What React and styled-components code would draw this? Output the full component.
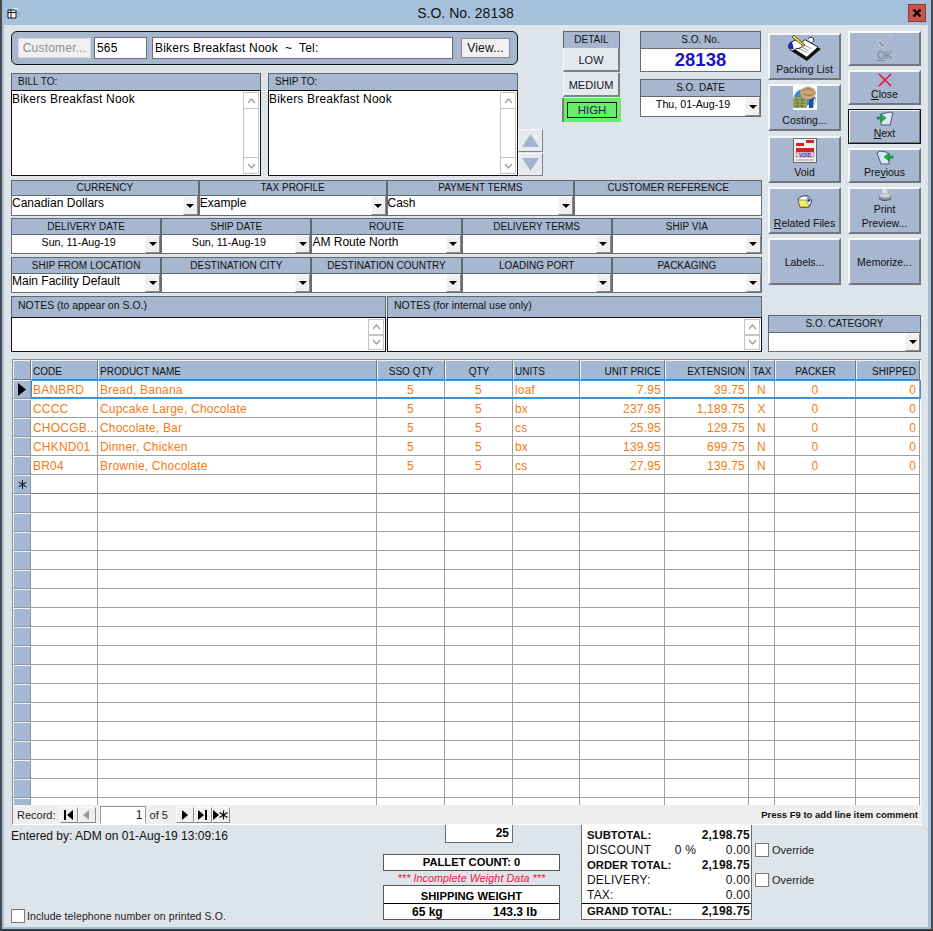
import React from "react";
import styled, { createGlobalStyle } from "styled-components";

const GlobalStyle = createGlobalStyle`
  html, body { margin: 0; padding: 0; background: #fff; }
  * { box-sizing: border-box; }
  body { font-family: "Liberation Sans", Arial, sans-serif; font-size: 12px; color: #000; }
`;

const columns = "18px 67px 279px 68px 68px 67px 85px 84px 26px 81px 64px";

const headers = [
  { label: "", align: "left" },
  { label: "CODE", align: "left" },
  { label: "PRODUCT NAME", align: "left" },
  { label: "SSO QTY", align: "center" },
  { label: "QTY", align: "center" },
  { label: "UNITS", align: "left" },
  { label: "UNIT PRICE", align: "right" },
  { label: "EXTENSION", align: "right" },
  { label: "TAX", align: "center" },
  { label: "PACKER", align: "center" },
  { label: "SHIPPED", align: "right" },
];

const lines = [
  ["BANBRD", "Bread, Banana", "5", "5", "loaf", "7.95", "39.75", "N", "0", "0"],
  ["CCCC", "Cupcake Large, Chocolate", "5", "5", "bx", "237.95", "1,189.75", "X", "0", "0"],
  ["CHOCGB...", "Chocolate, Bar", "5", "5", "cs", "25.95", "129.75", "N", "0", "0"],
  ["CHKND01", "Dinner, Chicken", "5", "5", "bx", "139.95", "699.75", "N", "0", "0"],
  ["BR04", "Brownie, Chocolate", "5", "5", "cs", "27.95", "139.75", "N", "0", "0"],
];

const cellAlign = ["left", "left", "center", "center", "left", "right", "right", "center", "center", "right"];

const Window = styled.div`
  width: 933px;
  height: 931px;
  overflow: hidden;
  background: #a6c0dc;
  border-left: 2px solid #4a4a4a;
  border-right: 2px solid #4a4a4a;
  border-bottom: 2px solid #3a3a3a;
`;

const TitleBar = styled.div`
  height: 25px;
  display: flex;
  align-items: center;
  padding-left: 5px;
`;

const TitleText = styled.div`
  flex: 1;
  text-align: center;
  font-size: 14px;
  color: #111;
`;

const CloseBox = styled.div`
  width: 18px;
  height: 18px;
  margin: 1px 5px 0 0;
  background: #c8574b;
  border: 1px solid #8c3a32;
  display: flex;
  align-items: center;
  justify-content: center;
`;

const Body = styled.div`
  width: 924px;
  height: 902px;
  margin-left: 2px;
  background: #dde4ea;
  padding: 6px 0 0 7px;
`;

const TopArea = styled.div`
  display: flex;
  gap: 6px;
`;

const LeftForm = styled.div`
  width: 751px;
`;

const HeadRow = styled.div`
  display: flex;
  height: 145px;
`;

const CustomerColumn = styled.div`
  width: 507px;
`;

const CustomerBar = styled.div`
  height: 34px;
  border: 1px solid #111;
  border-radius: 6px;
  background: #a6b7cf;
  display: flex;
  align-items: center;
  padding-left: 6px;
`;

const GreyButton = styled.div`
  height: 20px;
  width: ${(p) => p.$width}px;
  margin: ${(p) => p.$margin || "0"};
  background: #f0f0f0;
  border: 1px solid ${(p) => (p.$disabled ? "#d8d8d8" : "#8a8a8a")};
  color: ${(p) => (p.$disabled ? "#8f8f8f" : "#111")};
  display: flex;
  align-items: center;
  justify-content: center;
  letter-spacing: 0.2px;
`;

const TextField = styled.div`
  height: 22px;
  width: ${(p) => p.$width}px;
  margin-left: ${(p) => p.$left}px;
  background: #fff;
  border: 1px solid #6c6c6c;
  padding: 3px 0 0 2px;
  letter-spacing: 0.2px;
`;

const Addresses = styled.div`
  display: flex;
  gap: 7px;
  margin-top: 8px;
`;

const AddressBox = styled.div`
  width: 250px;
  height: 103px;
  display: flex;
  flex-direction: column;
`;

const PanelHeader = styled.div`
  height: ${(p) => p.$height || 17}px;
  flex: none;
  background: #a6b7cf;
  border: 1px solid #5f6870;
  border-bottom: 0;
  padding-left: ${(p) => (p.$left ? 6 : 0)}px;
  padding-top: ${(p) => (p.$height === 15 ? 0 : 1)}px;
  text-align: ${(p) => (p.$left ? "left" : "center")};
  font-size: ${(p) => p.$size || 10}px;
  line-height: ${(p) => (p.$height === 15 ? 13 : 14)}px;
  color: #111;
`;

const MemoArea = styled.div`
  flex: 1;
  background: #fff;
  border: 1px solid #111;
  display: flex;
  justify-content: space-between;
  min-height: 0;
  letter-spacing: 0.2px;
  line-height: 16px;
`;

const ScrollTrack = styled.div`
  width: 16px;
  margin: 1px 1px 1px 0;
  border: 1px solid #c4c4c4;
  display: flex;
  flex-direction: column;
  justify-content: ${(p) => (p.$tight ? "flex-start" : "space-between")};
`;

const ScrollCap = styled.div`
  height: 16px;
  display: flex;
  align-items: center;
  justify-content: center;
  border-top: ${(p) => (p.$down ? "1px solid #c4c4c4" : "0")};
  border-bottom: ${(p) => (p.$down ? "0" : "1px solid #c4c4c4")};
`;

const ArrowStack = styled.div`
  width: 25px;
  display: flex;
  flex-direction: column;
  justify-content: flex-end;
  gap: 1px;
`;

const ArrowButton = styled.div`
  height: 23px;
  background: #e6eaee;
  border: 1px solid;
  border-color: #f7f8fa #7c8288 #7c8288 #f7f8fa;
  display: flex;
  align-items: center;
  justify-content: center;
`;

const DetailColumn = styled.div`
  width: 57px;
  margin-left: 20px;
  display: flex;
  flex-direction: column;
`;

const DetailButton = styled.div`
  height: 24px;
  margin-bottom: 1px;
  padding-top: 1px;
  background: #e4e9ee;
  border: 1px solid;
  border-width: 0 2px 2px 1px;
  border-color: #f7f8fa #7c8288 #7c8288 #f7f8fa;
  display: flex;
  align-items: center;
  justify-content: center;
  font-size: 11px;
  color: #14142c;
`;

const HighButton = styled.div`
  height: 24px;
  width: 59px;
  margin-left: -1px;
  background: #66ee66;
  border-left: 2px solid #6a8a6a;
  padding: 4px 4px 4px 3px;
`;

const HighLabel = styled.div`
  height: 16px;
  border: 1px solid #111;
  display: flex;
  align-items: center;
  justify-content: center;
  color: #2a1a6a;
  font-size: 11.5px;
`;

const SoColumn = styled.div`
  width: 121px;
  margin-left: 20px;
  display: flex;
  flex-direction: column;
  gap: 10px;
`;

const SoBox = styled.div`
  height: 38px;
  display: flex;
  flex-direction: column;
`;

const SoValue = styled.div`
  flex: 1;
  background: #fff;
  border: 1px solid #6c6c6c;
  display: flex;
  align-items: center;
  justify-content: center;
  color: #1a14c8;
  font-size: 18.5px;
  font-weight: 700;
`;

const FieldGroup = styled.div`
  margin-top: 4px;
  display: flex;
  flex-direction: column;
  gap: 2px;
`;

const FieldRow = styled.div`
  display: grid;
  grid-template-columns: repeat(${(p) => p.$count}, 1fr);
  height: 36px;
  margin-bottom: ${(p) => p.$below || 0}px;
`;

const FieldCell = styled.div`
  display: flex;
  flex-direction: column;
  min-width: 0;
`;

const ComboBody = styled.div`
  flex: 1;
  background: #fff;
  border: 1px solid #6c6c6c;
  border-top-color: #5f6870;
  display: flex;
  align-items: stretch;
  justify-content: space-between;
`;

const ComboText = styled.div`
  flex: 1;
  line-height: 15px;
  font-size: ${(p) => (p.$center ? 10.7 : 12)}px;
  white-space: nowrap;
  text-align: ${(p) => (p.$center ? "center" : "left")};
`;

const DropButton = styled.div`
  width: 15px;
  flex: none;
  background: #f0f0f0;
  border: 1px solid;
  border-color: #f9f9f9 #8a8a8a #8a8a8a #f9f9f9;
  display: flex;
  align-items: center;
  justify-content: center;
  &::before {
    content: "";
    border: 4px solid transparent;
    border-top: 4px solid #000;
    border-bottom: 0;
  }
`;

const NotesRow = styled.div`
  display: flex;
  gap: 1px;
  height: 56px;
  margin-top: 3px;
`;

const NotesBox = styled.div`
  width: 375px;
  display: flex;
  flex-direction: column;
`;

const ButtonColumns = styled.div`
  width: 153px;
`;

const ButtonPair = styled.div`
  display: flex;
  gap: 7px;
`;

const ButtonColumn = styled.div`
  width: 73px;
  display: flex;
  flex-direction: column;
  gap: ${(p) => p.$gap}px;
  padding-top: ${(p) => p.$top || 0}px;
`;

const ActionButton = styled.div`
  height: ${(p) => p.$height}px;
  flex: none;
  margin-top: ${(p) => p.$shift || 0}px;
  background: #a6b7cf;
  border: 2px solid;
  border-color: #f5f7f9 #6f7880 #6f7880 #f5f7f9;
  outline: ${(p) => (p.$focus ? "1px solid #111" : "none")};
  outline-offset: -1px;
  display: flex;
  flex-direction: column;
  align-items: center;
  justify-content: ${(p) => (p.$center ? "center" : "flex-end")};
  padding-bottom: ${(p) => (p.$center ? 0 : 2)}px;
  color: ${(p) => (p.$disabled ? "#7d8894" : "#111")};
  font-size: 10.5px;
  line-height: 14px;
  text-align: center;
  white-space: nowrap;
  & u { text-underline-offset: 1px; }
`;

const IconGap = styled.div`
  height: ${(p) => p.$size}px;
  flex: none;
`;

const CategoryBox = styled.div`
  margin-top: 30px;
  height: 37px;
  display: flex;
  flex-direction: column;
`;

const GridFrame = styled.div`
  width: 909px;
  height: 446px;
  margin: 7px 0 0 1px;
  border-top: 1px solid #8c8c8c;
  border-left: 1px solid #8c8c8c;
  background: #fff;
  overflow: hidden;
`;

const GridRow = styled.div`
  display: grid;
  grid-template-columns: ${columns};
  height: ${(p) => (p.$head ? 20 : 19)}px;
  position: relative;
`;

const HeaderCell = styled.div`
  background: #a3b9d3;
  border: 1px solid;
  border-color: #eef2f6 #70787f #70787f #eef2f6;
  padding: 1px ${(p) => (p.$align === "right" ? 3 : 1)}px 0 1px;
  text-align: ${(p) => p.$align};
  font-size: 10px;
  line-height: 19px;
  color: #111;
  white-space: nowrap;
  overflow: hidden;
`;

const Selector = styled.div`
  background: #a3b9d3;
  border: 1px solid;
  border-color: #eef2f6 #8e979e #8e979e #eef2f6;
  display: flex;
  align-items: center;
  justify-content: center;
`;

const Cell = styled.div`
  border-right: 1px solid #a0a0a0;
  border-bottom: 1px solid ${(p) => (p.$dark ? "#808080" : "#a0a0a0")};
  padding: 0 ${(p) => (p.$align === "right" ? 3 : 2)}px 0 2px;
  text-align: ${(p) => p.$align || "left"};
  color: #f57a14;
  line-height: 20px;
  letter-spacing: 0.2px;
  white-space: nowrap;
  overflow: hidden;
`;

const ActiveOutline = styled.div`
  position: absolute;
  left: 18px;
  right: 0;
  top: 0;
  bottom: 0;
  border: 1px solid #3f92d8;
  border-bottom-width: 2px;
  pointer-events: none;
`;

const NavBar = styled.div`
  width: 910px;
  height: 20px;
  margin-left: 1px;
  background: #efefef;
  border-left: 1px solid #8c8c8c;
  border-bottom: 1px solid #fff;
  display: flex;
  align-items: center;
  padding-left: 4px;
  font-size: 11px;
  color: #222;
`;

const NavButton = styled.div`
  width: 18px;
  height: 16px;
  background: #efefef;
  border: 1px solid;
  border-color: #fbfbfb #8a8a8a #8a8a8a #fbfbfb;
  display: flex;
  align-items: center;
  justify-content: center;
  margin-left: ${(p) => p.$left || 0}px;
`;

const NavInput = styled.div`
  width: 46px;
  height: 18px;
  margin: 0 4px;
  background: #fff;
  border: 1px solid #9a9a9a;
  border-bottom-color: #fff;
  text-align: right;
  padding-right: 2px;
  line-height: 16px;
  font-size: 12px;
`;

const NavHint = styled.div`
  margin-left: auto;
  padding-right: 4px;
  font-size: 9.5px;
  font-weight: 700;
  color: #111;
`;

const BottomArea = styled.div`
  display: flex;
  height: 95px;
`;

const EntryColumn = styled.div`
  width: 372px;
  display: flex;
  flex-direction: column;
  justify-content: space-between;
  padding-top: 4px;
`;

const EntryText = styled.div`
  line-height: 15px;
  color: #111;
`;

const CheckLine = styled.div`
  display: flex;
  align-items: center;
  gap: ${(p) => p.$gap || 3}px;
  font-size: ${(p) => p.$size || 11}px;
  letter-spacing: ${(p) => p.$tracking || 0}px;
  color: #222;
  margin-bottom: ${(p) => p.$bottom || 0}px;
`;

const CheckBox = styled.div`
  width: 14px;
  height: 14px;
  background: #fff;
  border: 1px solid #7a7a7a;
`;

const WeightColumn = styled.div`
  width: 177px;
  display: flex;
  flex-direction: column;
`;

const QtyBox = styled.div`
  width: 68px;
  height: 18px;
  margin-left: 62px;
  background: #fff;
  border: 1px solid #6c6c6c;
  border-top: 0;
  text-align: right;
  padding-right: 3px;
  font-weight: 700;
  line-height: 16px;
`;

const PalletBox = styled.div`
  height: 17px;
  margin-top: 11px;
  background: #fff;
  border: 1px solid #555;
  text-align: center;
  font-size: 11.2px;
  font-weight: 700;
  line-height: 15px;
`;

const WeightWarning = styled.div`
  height: 14px;
  text-align: center;
  font-style: italic;
  font-size: 10.7px;
  line-height: 14px;
  color: #f0143c;
  letter-spacing: 0.1px;
`;

const WeightBox = styled.div`
  height: 35px;
  background: #fff;
  border: 1px solid #555;
  font-weight: 700;
`;

const WeightTitle = styled.div`
  height: 18px;
  border-bottom: 1px solid #000;
  text-align: center;
  font-size: 11.2px;
  line-height: 20px;
`;

const WeightValues = styled.div`
  display: flex;
  justify-content: space-between;
  padding: 0 22px 0 28px;
  line-height: 16px;
`;

const TotalsBox = styled.div`
  width: 171px;
  height: 95px;
  margin-left: 21px;
  background: #fff;
  border: 1px solid #6c6c6c;
  border-top: 0;
  padding-top: 3px;
`;

const TotalRow = styled.div`
  display: flex;
  height: ${(p) => (p.$grand ? 16 : 15)}px;
  padding: 0 1px 0 5px;
  font-weight: ${(p) => (p.$bold ? 700 : 400)};
  line-height: 15px;
  color: #111;
  letter-spacing: ${(p) => (p.$bold ? 0 : 0.2)}px;
  border-top: ${(p) => (p.$grand ? "1px solid #000" : "0")};
`;

const TotalLabel = styled.div`
  flex: 1;
  font-size: ${(p) => (p.$bold ? 11.3 : 12)}px;
`;

const TotalAmount = styled.div`
  width: 54px;
  text-align: right;
  letter-spacing: 0.2px;
`;

const OverrideColumn = styled.div`
  margin-left: 3px;
  padding-top: 18px;
  display: flex;
  flex-direction: column;
  gap: 16px;
`;

const AppIcon = () => (
  <svg width="16" height="12" viewBox="0 0 16 12">
    <path d="M1 3h8v8H1z" fill="#fff" stroke="#111" />
    <path d="M1 5.5h8M4 3v8" stroke="#111" />
    <path d="M4 1h6l2 2h-3z" fill="#bfefff" />
    <path d="M11 5l3 1.5-3 1z" fill="#8a9aa8" />
  </svg>
);

const CloseGlyph = () => (
  <svg width="10" height="10" viewBox="0 0 10 10">
    <path d="M1.5 1.5l7 7M8.5 1.5l-7 7" stroke="#000" strokeWidth="2.4" />
  </svg>
);

const ScrollChevron = ({ down, size = 9 }) => (
  <svg width={size} height="6" viewBox="0 0 9 6">
    <path d={down ? "M1 1l3.5 4L8 1" : "M1 5l3.5-4L8 5"} fill="none" stroke="#9a9a9a" strokeWidth="1.2" />
  </svg>
);

const Triangle = ({ down }) => (
  <svg width="17" height="13" viewBox="0 0 17 13">
    <path d={down ? "M0 0h17L8.5 13z" : "M8.5 0L17 13H0z"} fill="#a3b3d2" />
  </svg>
);

const PackingIcon = () => (
  <svg width="36" height="29" viewBox="0 0 36 29">
    <path d="M3 17l17 11 15-13-16-9z" fill="#111" />
    <path d="M6 15l14 9 12-11-14-8z" fill="#fff" stroke="#111" />
    <path d="M13 12l9 5M11 14l9 5M16 10l9 5" stroke="#777" strokeWidth="0.8" />
    <path d="M1 11c2-4 6-6 9-5l7 4-4 4-5 1-3 2c-3 0-5-3-4-6z" fill="#fff" stroke="#111" />
    <path d="M0 12c0-3 2-5 4-5l2 8c-3 1-6 0-6-3z" fill="#1c2cb0" />
    <path d="M6 0l12 11-2 1L4 2z" fill="#f4e22c" stroke="#111" strokeWidth="0.7" />
    <path d="M21 4c2-2 5-2 6 0s0 4-2 4" fill="#fff" stroke="#111" />
  </svg>
);

const CostingIcon = () => (
  <svg width="24" height="24" viewBox="0 0 24 24">
    <rect width="24" height="24" fill="#fff" />
    <circle cx="10" cy="12" r="9" fill="#3d8fc0" />
    <path d="M0 11h14v11H0z" fill="#a8a868" />
    <path d="M1 14h12M1 17h12M1 20h12M4 11v11M9 11v11" stroke="#5f7a3f" strokeWidth="1" />
    <path d="M16 11h6l1 3-3 8h-4z" fill="#1c4f9c" />
    <path d="M21 12l2 2-3 8z" fill="#e8eef4" />
    <ellipse cx="15" cy="7" rx="8" ry="6.5" fill="#c9a67c" />
    <path d="M10 5c3-3 7-3 10 0M11 8c3 2 7 2 10-1" stroke="#8f6e48" fill="none" />
  </svg>
);

const VoidIcon = () => (
  <svg width="24" height="25" viewBox="0 0 24 25">
    <rect x="0.5" y="0.5" width="23" height="24" fill="#f2f2f2" stroke="#6a6a6a" />
    <rect x="3" y="5" width="8" height="3" fill="#d81e1e" />
    <rect x="13" y="2" width="8" height="3" fill="#d81e1e" />
    <rect x="3" y="10" width="18" height="4" fill="#d81e1e" />
    <rect x="3" y="14" width="18" height="5" fill="#d8d8ee" stroke="#d81e1e" strokeWidth="0.5" />
    <text x="12" y="18.5" textAnchor="middle" fontSize="5" fontWeight="700" fill="#2a2ac8" fontFamily="Liberation Sans">VOID</text>
    <path d="M3 22h18" stroke="#999" />
  </svg>
);

const FolderIcon = () => (
  <svg width="16" height="13" viewBox="0 0 16 13">
    <path d="M1 4l4-3h6l4 5-3 6H3z" fill="#fff" stroke="#111" strokeWidth="0.8" />
    <path d="M1 5h9l2 7H3z" fill="#f2ee58" stroke="#555" strokeWidth="0.6" />
    <path d="M10 2l4 4-3 1z" fill="#2a3ac0" />
  </svg>
);

const CheckIcon = () => (
  <svg width="18" height="16" viewBox="0 0 18 16">
    <path d="M1 9l3-1 3 4L16 1l1 1L7 15h-2z" fill="#8794a4" stroke="#e6eaee" strokeWidth="0.7" />
  </svg>
);

const CrossIcon = () => (
  <svg width="14" height="14" viewBox="0 0 14 14">
    <path d="M1 1l12 12M13 1L1 13" stroke="#e0143c" strokeWidth="1.6" />
  </svg>
);

const NextIcon = () => (
  <svg width="18" height="15" viewBox="0 0 18 15">
    <path d="M5 3l9-2 3 1-3 12H5z" fill="#d8e8f8" stroke="#2a3a5a" strokeWidth="0.8" />
    <path d="M1 6h4V3l5 4-5 4V8H1z" fill="#14b83c" stroke="#0a5a1e" strokeWidth="0.5" />
  </svg>
);

const PreviousIcon = () => (
  <svg width="18" height="15" viewBox="0 0 18 15">
    <path d="M1 3l3-2 6 1 3 2v10H5z" fill="#d8e8f8" stroke="#2a3a5a" strokeWidth="0.8" />
    <path d="M17 6h-4V3L8 7l5 4V8h4z" fill="#14b83c" stroke="#0a5a1e" strokeWidth="0.5" />
  </svg>
);

const PrinterIcon = () => (
  <svg width="16" height="15" viewBox="0 0 16 15">
    <path d="M4 0h6l2 6H5z" fill="#dfe6ee" stroke="#99a" strokeWidth="0.5" />
    <ellipse cx="8" cy="9" rx="7.5" ry="4.5" fill="#8f9398" />
    <ellipse cx="8" cy="7.5" rx="6" ry="2.5" fill="#cfd2d6" />
    <path d="M1 11c3 3 11 3 14 0" stroke="#444" fill="none" />
  </svg>
);

const RowStar = () => (
  <svg width="9" height="9" viewBox="0 0 9 9">
    <path d="M4.5 0v9M0.6 2.2l7.8 4.6M8.4 2.2L0.6 6.8" stroke="#000" strokeWidth="1" />
  </svg>
);

const NavGlyph = ({ type, disabled }) => {
  const fill = disabled ? "#9a9a9a" : "#000";
  if (type === "first") return (
    <svg width="11" height="10" viewBox="0 0 11 10"><path d="M1 0h2v10H1zM10 0v10L4 5z" fill={fill} /></svg>
  );
  if (type === "prev") return (
    <svg width="7" height="10" viewBox="0 0 7 10"><path d="M6 0v10L0 5z" fill={fill} /></svg>
  );
  if (type === "next") return (
    <svg width="7" height="10" viewBox="0 0 7 10"><path d="M1 0v10l6-5z" fill={fill} /></svg>
  );
  if (type === "last") return (
    <svg width="11" height="10" viewBox="0 0 11 10"><path d="M1 0v10l6-5zM8 0h2v10H8z" fill={fill} /></svg>
  );
  return (
    <svg width="15" height="10" viewBox="0 0 15 10">
      <path d="M0 0v10l6-5z" fill={fill} />
      <path d="M10.5 0.5v9M6.5 2.5l8 5M14.5 2.5l-8 5" stroke={fill} strokeWidth="1.2" />
    </svg>
  );
};

const Memo = ({ tight, children }) => (
  <MemoArea>
    <div>{children}</div>
    <ScrollTrack $tight={tight}>
      <ScrollCap><ScrollChevron /></ScrollCap>
      <ScrollCap $down><ScrollChevron down /></ScrollCap>
    </ScrollTrack>
  </MemoArea>
);

const Field = ({ label, value, center, head = 16 }) => (
  <FieldCell>
    <PanelHeader $height={head}>{label}</PanelHeader>
    <ComboBody>
      <ComboText $center={center}>{value}</ComboText>
      <DropButton />
    </ComboBody>
  </FieldCell>
);

const PlainField = ({ label }) => (
  <FieldCell>
    <PanelHeader $height={15}>{label}</PanelHeader>
    <ComboBody />
  </FieldCell>
);

const OrderLine = ({ line, active }) => (
  <GridRow>
    <Selector>
      {active && (
        <svg width="8" height="13" viewBox="0 0 8 13"><path d="M0 0l8 6.5L0 13z" fill="#000" /></svg>
      )}
    </Selector>
    {line.map((value, i) => (
      <Cell key={i} $align={cellAlign[i]}>{value}</Cell>
    ))}
    {active && <ActiveOutline />}
  </GridRow>
);

const BlankLine = ({ isNew }) => (
  <GridRow>
    <Selector>{isNew && <RowStar />}</Selector>
    {cellAlign.map((_, i) => (
      <Cell key={i} $dark={isNew} />
    ))}
  </GridRow>
);

export default function App() {
  return (
    <Window>
      <GlobalStyle />
      <TitleBar>
        <AppIcon />
        <TitleText>S.O. No. 28138</TitleText>
        <CloseBox><CloseGlyph /></CloseBox>
      </TitleBar>
      <Body>
        <TopArea>
          <LeftForm>
            <HeadRow>
              <CustomerColumn>
                <CustomerBar>
                  <GreyButton $width={73} $disabled>Customer...</GreyButton>
                  <TextField $width={53} $left={3}>565</TextField>
                  <TextField $width={301} $left={5}>Bikers Breakfast Nook&nbsp; ~&nbsp; Tel:</TextField>
                  <GreyButton $width={49} $margin="0 0 0 8px">View...</GreyButton>
                </CustomerBar>
                <Addresses>
                  <AddressBox>
                    <PanelHeader $left>BILL TO:</PanelHeader>
                    <Memo>Bikers Breakfast Nook</Memo>
                  </AddressBox>
                  <AddressBox>
                    <PanelHeader $left>SHIP TO:</PanelHeader>
                    <Memo>Bikers Breakfast Nook</Memo>
                  </AddressBox>
                </Addresses>
              </CustomerColumn>
              <ArrowStack>
                <ArrowButton><Triangle /></ArrowButton>
                <ArrowButton><Triangle down /></ArrowButton>
              </ArrowStack>
              <DetailColumn>
                <PanelHeader>DETAIL</PanelHeader>
                <DetailButton>LOW</DetailButton>
                <DetailButton>MEDIUM</DetailButton>
                <HighButton><HighLabel>HIGH</HighLabel></HighButton>
              </DetailColumn>
              <SoColumn>
                <SoBox>
                  <PanelHeader>S.O. No.</PanelHeader>
                  <SoValue>28138</SoValue>
                </SoBox>
                <SoBox>
                  <PanelHeader>S.O. DATE</PanelHeader>
                  <ComboBody>
                    <ComboText $center>Thu, 01-Aug-19</ComboText>
                    <DropButton />
                  </ComboBody>
                </SoBox>
              </SoColumn>
            </HeadRow>
            <FieldGroup>
              <FieldRow $count={4}>
                <Field head={15} label="CURRENCY" value="Canadian Dollars" />
                <Field head={15} label="TAX PROFILE" value="Example" />
                <Field head={15} label="PAYMENT TERMS" value="Cash" />
                <PlainField label="CUSTOMER REFERENCE" />
              </FieldRow>
              <FieldRow $count={5} $below={1}>
                <Field label="DELIVERY DATE" value="Sun, 11-Aug-19" center />
                <Field label="SHIP DATE" value="Sun, 11-Aug-19" center />
                <Field label="ROUTE" value="AM Route North" />
                <Field label="DELIVERY TERMS" />
                <Field label="SHIP VIA" />
              </FieldRow>
              <FieldRow $count={5}>
                <Field label="SHIP FROM LOCATION" value="Main Facility Default" />
                <Field label="DESTINATION CITY" />
                <Field label="DESTINATION COUNTRY" />
                <Field label="LOADING PORT" />
                <Field label="PACKAGING" />
              </FieldRow>
            </FieldGroup>
            <NotesRow>
              <NotesBox>
                <PanelHeader $left $height={21} $size={10.5}>NOTES (to appear on S.O.)</PanelHeader>
                <Memo tight />
              </NotesBox>
              <NotesBox>
                <PanelHeader $left $height={21} $size={10.5}>NOTES (for internal use only)</PanelHeader>
                <Memo tight />
              </NotesBox>
            </NotesRow>
          </LeftForm>
          <ButtonColumns>
            <ButtonPair>
              <ButtonColumn $gap={4} $top={2}>
                <ActionButton $height={47}><PackingIcon />Packing List</ActionButton>
                <ActionButton $height={47}><CostingIcon /><IconGap $size={3} />Costing...</ActionButton>
                <ActionButton $height={47} $shift={1}><VoidIcon /><IconGap $size={2} />Void</ActionButton>
                <ActionButton $height={47}><FolderIcon /><IconGap $size={8} /><span><u>R</u>elated Files</span></ActionButton>
                <ActionButton $height={47} $center>Labels...</ActionButton>
              </ButtonColumn>
              <ButtonColumn $gap={4}>
                <ActionButton $height={35} $disabled><CheckIcon /><span><u>O</u>K</span></ActionButton>
                <ActionButton $height={35}><CrossIcon /><span><u>C</u>lose</span></ActionButton>
                <ActionButton $height={35} $focus><NextIcon /><span><u>N</u>ext</span></ActionButton>
                <ActionButton $height={35}><PreviousIcon /><span>Pre<u>v</u>ious</span></ActionButton>
                <ActionButton $height={47}><PrinterIcon />Print<br />Preview...</ActionButton>
                <ActionButton $height={47} $center>Memorize...</ActionButton>
              </ButtonColumn>
            </ButtonPair>
            <CategoryBox>
              <PanelHeader>S.O. CATEGORY</PanelHeader>
              <ComboBody>
                <ComboText />
                <DropButton />
              </ComboBody>
            </CategoryBox>
          </ButtonColumns>
        </TopArea>
        <GridFrame>
          <GridRow $head>
            {headers.map((h, i) => (
              <HeaderCell key={i} $align={h.align}>{h.label}</HeaderCell>
            ))}
          </GridRow>
          {lines.map((line, i) => (
            <OrderLine key={line[0]} line={line} active={i === 0} />
          ))}
          <BlankLine isNew />
          {Array.from({ length: 17 }, (_, i) => (
            <BlankLine key={i} />
          ))}
        </GridFrame>
        <NavBar>
          Record:
          <NavButton $left={4}><NavGlyph type="first" /></NavButton>
          <NavButton><NavGlyph type="prev" disabled /></NavButton>
          <NavInput>1</NavInput>
          of 5
          <NavButton $left={8}><NavGlyph type="next" /></NavButton>
          <NavButton><NavGlyph type="last" /></NavButton>
          <NavButton><NavGlyph type="new" /></NavButton>
          <NavHint>Press F9 to add line item comment</NavHint>
        </NavBar>
        <BottomArea>
          <EntryColumn>
            <EntryText>Entered by: ADM on 01-Aug-19 13:09:16</EntryText>
            <CheckLine $size={10.5} $bottom={-3} $gap={2} $tracking={0.1}>
              <CheckBox />
              Include telephone number on printed S.O.
            </CheckLine>
          </EntryColumn>
          <WeightColumn>
            <QtyBox>25</QtyBox>
            <PalletBox>PALLET COUNT: 0</PalletBox>
            <WeightWarning>*** Incomplete Weight Data ***</WeightWarning>
            <WeightBox>
              <WeightTitle>SHIPPING WEIGHT</WeightTitle>
              <WeightValues><span>65 kg</span><span>143.3 lb</span></WeightValues>
            </WeightBox>
          </WeightColumn>
          <TotalsBox>
            <TotalRow $bold><TotalLabel $bold>SUBTOTAL:</TotalLabel><TotalAmount>2,198.75</TotalAmount></TotalRow>
            <TotalRow><TotalLabel>DISCOUNT</TotalLabel><span>0 %</span><TotalAmount>0.00</TotalAmount></TotalRow>
            <TotalRow $bold><TotalLabel $bold>ORDER TOTAL:</TotalLabel><TotalAmount>2,198.75</TotalAmount></TotalRow>
            <TotalRow><TotalLabel>DELIVERY:</TotalLabel><TotalAmount>0.00</TotalAmount></TotalRow>
            <TotalRow><TotalLabel>TAX:</TotalLabel><TotalAmount>0.00</TotalAmount></TotalRow>
            <TotalRow $bold $grand><TotalLabel $bold>GRAND TOTAL:</TotalLabel><TotalAmount>2,198.75</TotalAmount></TotalRow>
          </TotalsBox>
          <OverrideColumn>
            <CheckLine><CheckBox />Override</CheckLine>
            <CheckLine><CheckBox />Override</CheckLine>
          </OverrideColumn>
        </BottomArea>
      </Body>
    </Window>
  );
}
